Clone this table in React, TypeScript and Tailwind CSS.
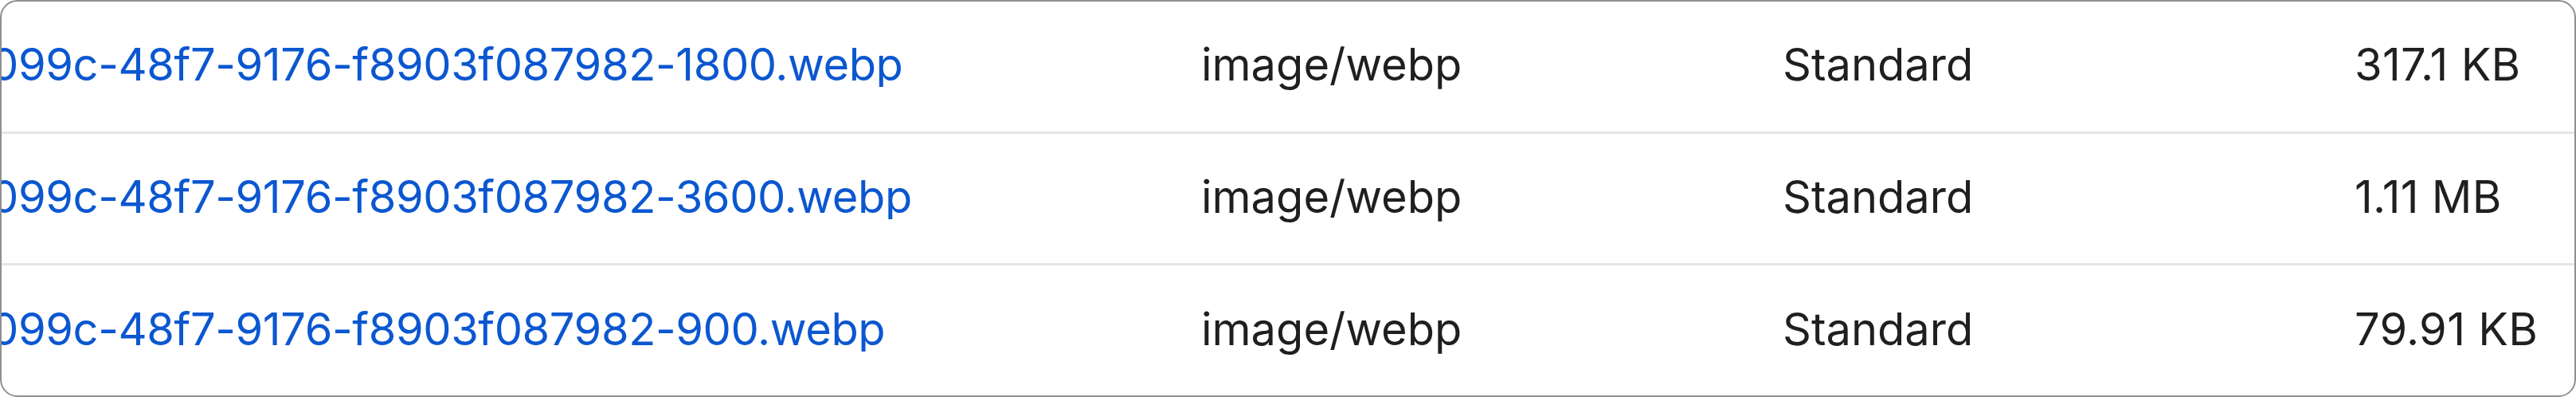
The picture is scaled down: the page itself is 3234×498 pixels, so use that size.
const files = [
    { name: "099c-48f7-9176-f8903f087982-1800.webp", type: "image/webp", storage: "Standard", size: "317.1 KB" },
    { name: "099c-48f7-9176-f8903f087982-3600.webp", type: "image/webp", storage: "Standard", size: "1.11 MB" },
    { name: "099c-48f7-9176-f8903f087982-900.webp", type: "image/webp", storage: "Standard", size: "79.91 KB" },
];

const App = () => {
    return (
        <div className="w-[3234px] h-[498px] bg-white font-['Inter',sans-serif] text-[56px] leading-none">
            <div className="flex flex-col h-full rounded-[22px] border-2 border-[#8f8f8f] overflow-hidden">
                {files.map((f, i) => (
                    <div
                        key={f.name}
                        className={`flex-1 grid grid-cols-[1506px_730px_718px_1fr] items-center pb-1 ${
                            i > 0 ? "border-t-[3px] border-[#e6e6e6]" : ""
                        }`}
                    >
                        <div className="overflow-hidden">
                            <div className="-ml-[14px] tracking-[-0.4px] text-[#0b57d0] whitespace-nowrap">{f.name}</div>
                        </div>
                        <div className="text-[#1f1f1f]">{f.type}</div>
                        <div className="text-[#1f1f1f]">{f.storage}</div>
                        <div className="text-[#1f1f1f] tracking-[0.3px]">{f.size}</div>
                    </div>
                ))}
            </div>
        </div>
    );
};

export default App;
